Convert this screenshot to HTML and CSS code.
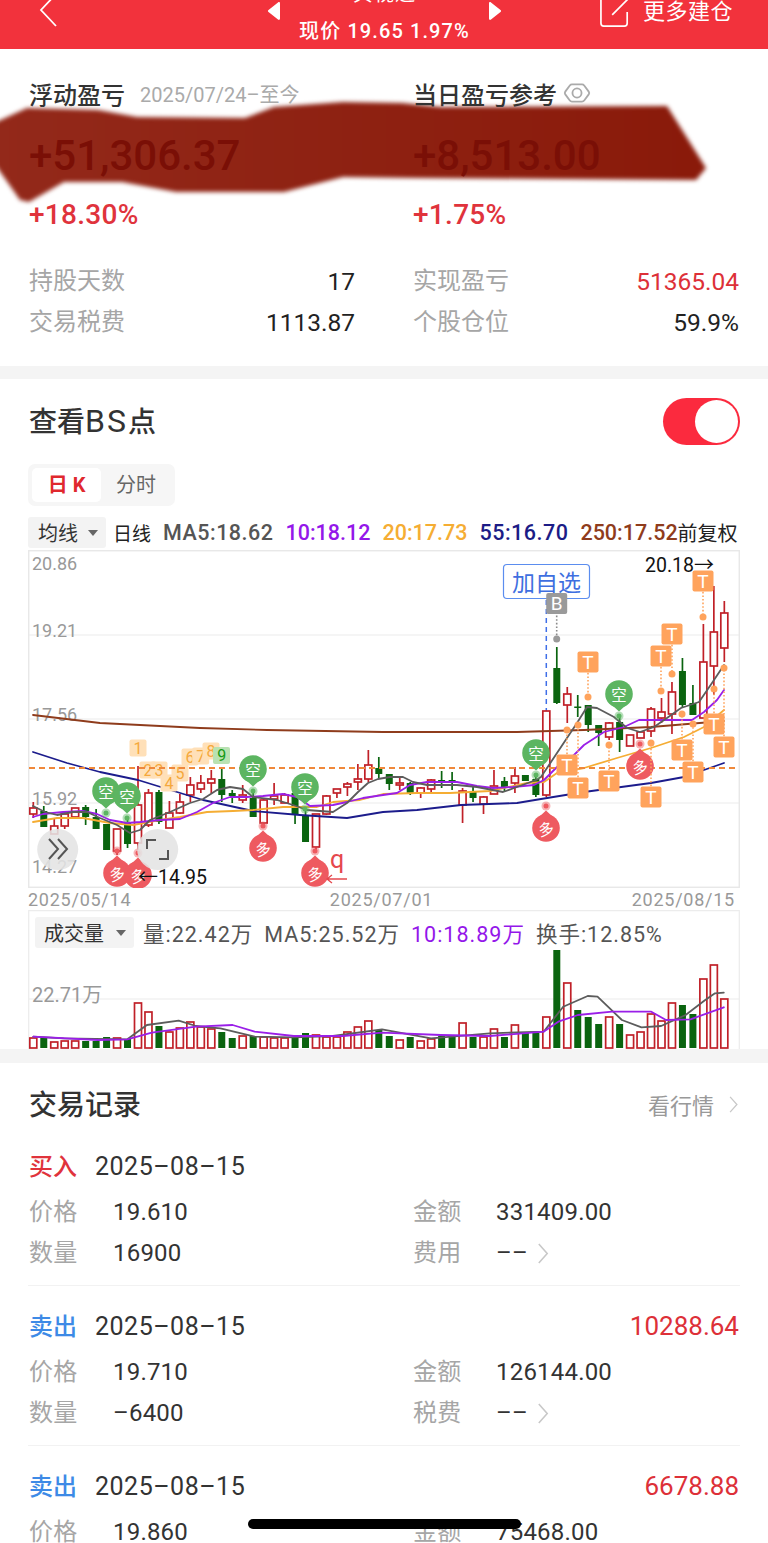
FILE: index.html
```html
<!DOCTYPE html>
<html lang="zh-CN">
<head>
<meta charset="utf-8">
<title>持仓详情</title>
<link rel="stylesheet" href="styles.css">
</head>
<body>
<div class="app">
  <header class="topbar">
    <svg class="back" viewBox="0 0 20 34" aria-hidden="true"><path d="M17 1 2 17l15 16"/></svg>
    <div class="stock">
      <svg class="tri" viewBox="0 0 14 20" aria-hidden="true"><path d="M13 2.500v15c0 1.300-1 1.800-2 1L1.500 11c-.8-.6-.8-1.500 0-2L11 1.500c1-.8 2-.3 2 1z"/></svg>
      <div class="stock-text">
        <div class="stock-name">贝视通</div>
        <div class="stock-price">现价 19.65 1.97%</div>
      </div>
      <svg class="tri" viewBox="0 0 14 20" aria-hidden="true"><path d="M1 2.500v15c0 1.300 1 1.800 2 1L12.500 11c.8-.6.8-1.500 0-2L3 1.500c-1-.8-2-.3-2 1z"/></svg>
    </div>
    <div class="more">
      <svg class="share" viewBox="0 0 32 32" aria-hidden="true"><path d="M14 0H4a3 3 0 0 0-3 3v25a3 3 0 0 0 3 3h22a3 3 0 0 0 3-3V16M13 19 33-1"/></svg>
      <span>更多建仓</span>
    </div>
  </header>

  <section class="summary">
    <svg class="scribble" viewBox="0 0 768 220" aria-hidden="true">
      <defs>
        <linearGradient id="inkFade" x1="0" x2="1" y1="0" y2="0">
          <stop offset="0" stop-color="#93291a"/>
          <stop offset="1" stop-color="#8a1a0a"/>
        </linearGradient>
      </defs>
      <path d="M-6 123 27 108 98 110 137 117 245 118 274 107 343 102 402 103 441 107 667 106 706 168 696 180 417 178 343 177 284 192 176 192 122 182 64 182 29 202 20 200-6 163Z"/>
    </svg>
    <div class="pnl-grid">
      <div class="pnl">
        <div class="pnl-title">浮动盈亏<span class="since">2025/07/24–至今</span></div>
        <div class="pnl-value">+51,306.37</div>
        <div class="pnl-pct">+18.30%</div>
      </div>
      <div class="pnl">
        <div class="pnl-title">当日盈亏参考<svg class="eye" viewBox="0 0 30 22" aria-hidden="true"><path d="M9.500 1.500h11c1 0 1.800.4 2.400 1.200l5 6.800c.7 1 .7 2 0 3l-5 6.800c-.6.8-1.400 1.200-2.400 1.200h-11c-1 0-1.800-.4-2.400-1.200l-5-6.800c-.7-1-.7-2 0-3l5-6.800c.6-.8 1.400-1.200 2.400-1.200z"/><circle cx="15" cy="11" r="5"/></svg></div>
        <div class="pnl-value">+8,513.00</div>
        <div class="pnl-pct">+1.75%</div>
      </div>
    </div>
    <div class="stats">
      <div class="stat"><span class="muted">持股天数</span><span class="num">17</span></div>
      <div class="stat"><span class="muted">实现盈亏</span><span class="num red">51365.04</span></div>
      <div class="stat"><span class="muted">交易税费</span><span class="num">1113.87</span></div>
      <div class="stat"><span class="muted">个股仓位</span><span class="num">59.9%</span></div>
    </div>
  </section>

  <div class="band"></div>

  <section class="bs">
    <div class="bs-head">
      <h2 class="section-title">查看<span class="latin">BS</span>点</h2>
      <div class="toggle"><span class="knob"></span></div>
    </div>
    <div class="tabs">
      <span class="tab tab-on">日 K</span>
      <span class="tab">分时</span>
    </div>
    <div class="kline-bar">
      <span class="pill">均线<i class="caret"></i></span>
      <span class="period">日线</span>
      <span class="ma ma5">MA5:18.62</span>
      <span class="ma ma10">10:18.12</span>
      <span class="ma ma20">20:17.73</span>
      <span class="ma ma55">55:16.70</span>
      <span class="ma ma250">250:17.52</span>
      <span class="adjust">前复权</span>
    </div>
    <svg id="kline" class="kline" viewBox="28 550 712 338"></svg>
    <div class="dates"><span>2025/05/14</span><span>2025/07/01</span><span>2025/08/15</span></div>
    <div class="volume">
      <svg id="vol" class="vol" viewBox="28 910 712 139"></svg>
      <div class="vol-bar">
        <span class="pill pill-vol">成交量<i class="caret"></i></span>
        <span class="ma ma5">量:22.42万</span>
        <span class="ma ma5">MA5:25.52万</span>
        <span class="ma ma10">10:18.89万</span>
        <span class="ma ma5">换手:12.85%</span>
      </div>
    </div>
  </section>

  <div class="band band-b"></div>

  <section class="trades">
    <div class="trades-head">
      <h2 class="section-title">交易记录</h2>
      <div class="quote">看行情<svg class="chev" viewBox="0 0 10 20" aria-hidden="true"><path d="M1 1l8 9-8 9"/></svg></div>
    </div>

    <article class="record">
      <div class="record-head"><b class="buy">买入</b><span class="rec-date">2025–08–15</span></div>
      <div class="record-grid">
        <span class="muted">价格</span><span>19.610</span><span class="muted">金额</span><span>331409.00</span>
        <span class="muted">数量</span><span>16900</span><span class="muted">费用</span><span class="fee">––<svg class="chev chev-fee" viewBox="0 0 10 20" aria-hidden="true"><path d="M1 1l8 9-8 9"/></svg></span>
      </div>
    </article>

    <article class="record">
      <div class="record-head"><b class="sell">卖出</b><span class="rec-date">2025–08–15</span><span class="profit">10288.64</span></div>
      <div class="record-grid">
        <span class="muted">价格</span><span>19.710</span><span class="muted">金额</span><span>126144.00</span>
        <span class="muted">数量</span><span>–6400</span><span class="muted">税费</span><span class="fee">––<svg class="chev chev-fee" viewBox="0 0 10 20" aria-hidden="true"><path d="M1 1l8 9-8 9"/></svg></span>
      </div>
    </article>

    <article class="record">
      <div class="record-head"><b class="sell">卖出</b><span class="rec-date">2025–08–15</span><span class="profit">6678.88</span></div>
      <div class="record-grid">
        <span class="muted">价格</span><span>19.860</span><span class="muted">金额</span><span>75468.00</span>
      </div>
    </article>
  </section>

  <div class="home-bar"></div>
</div>
<script src="chart.js"></script>
</body>
</html>
```
FILE: styles.css
```css
* { box-sizing: border-box; }
html, body { margin: 0; padding: 0; background: #fff; overflow: hidden; }
body { font-family: Roboto, "Noto Sans CJK SC", sans-serif; color: #333; }
.app { position: relative; width: 768px; height: 1543px; overflow: hidden; background: #fff; }

/* top bar */
.topbar { position: relative; height: 49px; background: #f2323c; color: #fff; overflow: hidden; }
.back { position: absolute; left: 39px; top: -7px; width: 20px; height: 34px; fill: none; stroke: #fff; stroke-width: 1.800; }
.stock { position: absolute; left: 267px; width: 235px; top: 0; display: flex; justify-content: space-between; }
.tri { width: 14px; height: 20px; margin-top: 1px; fill: #fff; flex: none; }
.stock-text { text-align: center; }
.stock-name { font-size: 20px; line-height: 24px; height: 24px; margin-top: -18px; letter-spacing: 1px; }
.stock-price { font-size: 20px; line-height: 26px; margin-top: 12px; white-space: nowrap; letter-spacing: 1.100px; font-weight: 500; }
.more { position: absolute; right: 35px; top: -3px; display: flex; align-items: center; gap: 13px; font-size: 22px; line-height: 30px; letter-spacing: .5px; }
.share { width: 30px; height: 30px; fill: none; stroke: #fff; stroke-width: 1.800; overflow: visible; }

/* floating profit summary */
.summary { position: relative; height: 317px; padding: 28px 29px 0; }
.scribble { position: absolute; left: 0; top: -49px; width: 768px; height: 220px; overflow: visible; filter: blur(2.200px); }
.scribble path { fill: url(#inkFade); }
.pnl-grid { position: relative; display: grid; grid-template-columns: 384px 326px; }
.pnl-title { display: flex; align-items: center; height: 32px; font-size: 24px; font-weight: 500; white-space: nowrap; }
.since { margin-left: 15px; font-size: 20px; font-weight: 400; color: #aaa; }
.eye { width: 28px; height: 20px; margin-left: 6px; fill: none; stroke: #aaa; stroke-width: 2; }
.pnl-value { margin-top: 22px; font-size: 42px; line-height: 50px; font-weight: 500; color: #7a0f06; }
.pnl-pct { margin-top: 16px; font-size: 28px; line-height: 36px; font-weight: 500; letter-spacing: .3px; color: #e0333c; }
.stats { display: grid; grid-template-columns: 326px 326px; column-gap: 58px; margin-top: 28px; font-size: 24px; line-height: 41px; }
.stat { display: flex; justify-content: space-between; color: #222; }
.num { font-size: 24.500px; }
.muted { color: #a6a6a6; }
.red { color: #dd3038; }

.band { height: 13px; background: #f4f4f4; }
.band-b { height: 14px; }

/* buy / sell points */
.bs { height: 670px; padding: 0 28px; overflow: hidden; }
.bs-head { display: flex; justify-content: space-between; align-items: center; padding: 19px 0 0 1px; height: 66px; }
.section-title { margin: 0; font-size: 28px; line-height: 40px; font-weight: 500; color: #333; }
.latin { font-size: 32px; font-weight: 400; letter-spacing: 2px; }
.toggle { position: relative; width: 77px; height: 47px; border-radius: 24px; background: #fb2a3e; }
.knob { position: absolute; right: 2px; top: 2px; width: 43px; height: 43px; border-radius: 50%; background: #fff; }
.tabs { display: inline-flex; margin-top: 19px; height: 42px; padding: 4px; background: #f6f6f6; border-radius: 7px; vertical-align: top; }
.tab { width: 70px; height: 34px; font-size: 20px; line-height: 34px; text-align: center; color: #666; }
.tab-on { width: 69px; background: #fff; color: #e0282e; font-weight: 700; border-radius: 5px; }
.kline-bar { display: flex; align-items: center; height: 31px; margin-top: 11px; font-size: 19px; white-space: nowrap; }
.pill { display: inline-flex; align-items: center; justify-content: space-between; flex: none; width: 78px; height: 31px; padding: 0 8px 0 10px; background: #f3f3f3; border-radius: 3px; color: #333; font-size: 20px; }
.pill-vol { width: 99px; padding-left: 9px; }
.caret { width: 0; height: 0; border: 5.500px solid transparent; border-top: 6px solid #666; border-bottom: 0; }
.period { margin-left: 7px; color: #222; }
.ma { font-size: 21.500px; font-weight: 500; letter-spacing: .5px; }
.kline-bar .ma { margin-left: 12px; }
.kline-bar .ma10, .kline-bar .ma20, .kline-bar .ma250 { letter-spacing: 0; }
.ma5 { color: #555; }
.ma10 { color: #9417ea; }
.ma20 { color: #f5ad33; }
.ma55 { color: #1c1c86; }
.ma250 { color: #8f3c1c; }
.adjust { margin-left: 0; font-size: 20px; color: #222; }
.kline { display: block; width: 712px; height: 338px; margin-top: 2px; }
.dates { display: flex; justify-content: space-between; height: 22px; padding-right: 5px; font-size: 18px; line-height: 24px; color: #999; letter-spacing: .75px; }
.volume { position: relative; height: 139px; }
.vol { display: block; width: 712px; height: 139px; }
.vol-bar { position: absolute; left: 7px; top: 7px; display: flex; align-items: center; gap: 11px; height: 31px; white-space: nowrap; }
.vol-bar .pill { margin-right: -2px; }
.vol-bar .ma { font-weight: 400; letter-spacing: 1px; }

/* chart drawing */
.frame { fill: #fff; stroke: #e8e8e8; stroke-width: 1.500; }
.grid { stroke: #ececec; stroke-width: 1.200; }
.now { stroke: #f0883a; stroke-width: 1.800; stroke-dasharray: 6 4; }
.axis { font: 18px Roboto, sans-serif; fill: #999; }
.axis-vol { font: 20px Roboto, "Noto Sans CJK SC", sans-serif; fill: #999; }
.up { fill: #fff; stroke: #c02028; stroke-width: 1.700; }
.up-wick { stroke: #c02028; stroke-width: 1.700; }
.down { fill: #0a640f; }
.down-wick { stroke: #0a640f; stroke-width: 1.700; }
.line { fill: none; stroke-width: 1.800; stroke-linejoin: round; stroke-linecap: round; }
.l5 { stroke: #5c5c5c; }
.l10 { stroke: #9a1fe8; }
.l20 { stroke: #f5ad33; }
.l55 { stroke: #1c1c8c; }
.l250 { stroke: #8f3c1c; }
.pin { text-anchor: middle; dominant-baseline: central; font: 15.500px "Noto Sans CJK SC", sans-serif; fill: #fff; }
.short { fill: #5cb561; }
.long { fill: #ee5a60; }
.halo { opacity: .45; }
.t-box { fill: #ffa35c; }
.t-stem { stroke: #ffa35c; stroke-width: 1.600; stroke-dasharray: 1.600 2; }
.t-label { text-anchor: middle; dominant-baseline: central; font: 19px Roboto, sans-serif; fill: #fff; }
.b-box { fill: #9a9a9a; }
.b-stem { stroke: #8a8a8a; stroke-width: 1.600; stroke-dasharray: 1.600 2; }
.b-line { stroke: #3f6fe8; stroke-width: 1.500; stroke-dasharray: 5 4; }
.add-box { fill: #fff; stroke: #5b8def; stroke-width: 1.200; }
.add-text { text-anchor: middle; dominant-baseline: central; font: 23px "Noto Sans CJK SC", sans-serif; fill: #3f6fe0; }
.nine { fill: #ffe0b8; }
.nine-text { text-anchor: middle; dominant-baseline: central; font: 16px Roboto, sans-serif; fill: #f5a83c; }
.nine-g { fill: #b9e2b2; }
.nine-g-text { text-anchor: middle; dominant-baseline: central; font: 16px Roboto, sans-serif; fill: #159a15; }
.extreme { font: 19.500px Roboto, sans-serif; fill: #111; }
.arrow { font: 20px "Noto Sans CJK SC", sans-serif; }
.note { font: 400 25px Roboto, sans-serif; fill: #e5484d; }
.note-line { fill: none; stroke: #e5484d; stroke-width: 1.300; }
.float-btn { fill: #e4e4e4; opacity: .88; }
.float-mark { fill: none; stroke: #555; stroke-width: 2; }

/* trade history */
.trades { height: 480px; padding: 23px 28px 0; background: #fff; }
.trades-head { display: flex; justify-content: space-between; align-items: center; height: 40px; padding-left: 1px; }
.quote { display: flex; align-items: center; gap: 15px; margin: -4px 2px 0 0; font-size: 22px; color: #999; }
.chev { width: 9px; height: 17px; fill: none; stroke: #c8c8c8; stroke-width: 1.500; }
.chev-fee { width: 12px; height: 21px; }
.record { height: 160px; padding: 22px 1px 0; border-bottom: 1px solid #f2f2f2; }
.record-head { display: flex; align-items: center; height: 36px; font-size: 25px; }
.record-head b { margin-top: -4px; font-size: 24px; font-weight: 500; }
.buy { color: #e0333c; }
.sell { color: #3d8ae6; }
.rec-date { margin-left: 18px; color: #333; letter-spacing: .5px; }
.profit { margin-left: auto; font-size: 26px; color: #dd3038; }
.record-grid { display: grid; grid-template-columns: 84px 300px 83px 1fr; grid-auto-rows: 41px; margin-top: 8px; font-size: 24px; line-height: 41px; letter-spacing: .2px; color: #333; }
.fee { display: flex; align-items: center; gap: 9px; }

.home-bar { position: absolute; left: 248px; top: 1519px; width: 273px; height: 10px; border-radius: 5px; background: #000; }
```
FILE: chart.js
```js
// Draws the daily K-line and the volume panel from hand-entered series.
const NS = 'http://www.w3.org/2000/svg';
const slotX = i => 33.3 + i * 10.47;

function el(parent, tag, attrs, text) {
  const node = document.createElementNS(NS, tag);
  for (const k in attrs) node.setAttribute(k, attrs[k]);
  if (text !== undefined) node.textContent = text;
  parent.appendChild(node);
  return node;
}

// [type, wick top, body top, body bottom, wick bottom]; the type is u (up) or d (down)
const candles = [
  ['u',802,808,814,818],['d',806,811,827,827],['u',819,826,834,834],['u',812,814,826,829],['u',808,808,817,817],
  ['d',805,807,817,825],['d',809,817,829,829],['d',824,824,850,850],['u',829,829,851,855],['d',818,823,844,848],
  ['u',766,805,843,850],['u',789,793,825,827],['d',790,792,822,824],['u',801,813,828,828],['u',794,802,813,814],
  ['u',777,785,795,802],['u',775,783,789,793],['u',770,779,783,793],['d',768,779,795,802],['d',790,793,796,803],
  ['u',785,795,800,803],['d',790,798,817,817],['u',798,800,823,825],['u',783,796,799,805],['u',793,795,803,803],
  ['d',792,793,815,824],['d',810,815,842,842],['u',814,814,847,852],['u',795,796,814,815],['u',789,789,793,798],
  ['u',782,784,787,796],['u',764,779,782,790],['u',750,765,779,782],['d',757,768,774,778],['d',774,774,784,790],
  ['u',778,783,785,790],['d',782,783,793,795],['u',787,788,793,798],['u',779,780,789,793],['d',771,780,783,788],
  ['d',772,780,782,790],['u',788,791,805,823],['d',787,791,798,802],['u',796,797,804,814],['u',770,786,794,794],
  ['d',777,781,787,792],['u',767,776,783,793],['d',775,775,781,781],['d',775,779,795,797],['u',711,711,795,797],
  ['d',647,668,703,704],['u',687,694,705,723],['d',695,706.500,708,717],['d',705,705,725,732],['d',725,725,733,746],
  ['u',722,723,737,740],['d',718,722,740,752],['u',735,735,746,746],['u',732,732,738,738],['u',707,709,731,737],
  ['u',698,712,718,723],['u',682,692,714,734],['d',658,671,705,707],['d',685,703,715,715],['u',624,662,718,718],
  ['u',586,632,666,695],['u',601,613,648,662]
];

const maLines = {
  l250: '33,715 100,723 200,728 267,730 383,732 517,732 584,730 651,727 724,721',
  l55: '33,752 67,763 100,772 138,780 203,800 253,811 300,815 347,818 383,812 417,810 461,805 517,803 541,799 584,792 651,783 684,777 724,763',
  l20: '33,822 57,818 83,818 110,823 133,825 160,820 180,817 207,812 233,811 253,810 283,807 317,807 333,802 360,800 383,794 417,793 450,793 490,791 527,783 544,782 557,773 584,768 617,758 651,748 684,737 704,727 724,710',
  l10: '33,817 43,814 63,812 83,811 97,814 110,820 127,823 140,822 160,820 180,819 197,812 213,803 230,797 247,797 263,796 283,794 297,797 310,806 333,805 347,802 363,798 383,795 397,793 410,785 427,782 457,782 477,786 493,788 513,787 534,785 544,780 557,767 574,755 584,745 604,732 624,727 639,720 692,720 704,712 717,700 724,690',
  l5: '33,806 45,812 57,815 73,812 87,812 100,818 117,825 130,833 140,830 150,820 170,812 190,803 203,799 217,790 230,787 243,789 253,797 277,800 293,805 307,810 333,812 347,803 358,792 368,783 378,779 390,777 403,777 413,782 427,785 457,785 477,787 503,792 517,787 536,780 541,777 577,723 587,707 597,708 614,717 627,728 640,732 654,727 667,718 681,708 699,702 712,683 724,665'
};

function drawKline(svg) {
  el(svg, 'rect', { class: 'frame', x: 28.700, y: 550.700, width: 710.600, height: 336.600 });
  [635, 719, 803].forEach(y => el(svg, 'line', { class: 'grid', x1: 29, x2: 739, y1: y, y2: y }));
  [['20.86', 569.500], ['19.21', 637], ['17.56', 721], ['15.92', 804.500], ['14.27', 872.500]].forEach(([t, y]) =>
    el(svg, 'text', { class: 'axis', x: 32, y }, t));

  el(svg, 'line', { class: 'b-line', x1: 546.300, x2: 546.300, y1: 600, y2: 711 });

  candles.forEach(([type, wt, bt, bb, wb], i) => {
    const x = slotX(i);
    el(svg, 'line', { class: type === 'u' ? 'up-wick' : 'down-wick', x1: x, x2: x, y1: wt, y2: wb });
    el(svg, 'rect', { class: type === 'u' ? 'up' : 'down', x: x - 3.500, y: bt, width: 7, height: Math.max(bb - bt, 1.500) });
  });

  Object.keys(maLines).forEach(k => el(svg, 'polyline', { class: 'line ' + k, points: maLines[k] }));

  // TD sequence counters
  [[1,138,748],[2,148,770],[3,159,770],[4,169,783],[5,180,773],[6,190,757],[7,200.700,756],[8,211,751]].forEach(([n, x, y]) => {
    el(svg, 'rect', { class: 'nine', x: x - 8.500, y: y - 8.500, width: 17, height: 17, rx: 2 });
    el(svg, 'text', { class: 'nine-text', x, y }, n);
  });
  el(svg, 'rect', { class: 'nine-g', x: 213, y: 747, width: 17, height: 17, rx: 2 });
  el(svg, 'text', { class: 'nine-g-text', x: 221.700, y: 755.500 }, 9);

  el(svg, 'line', { class: 'now', x1: 29, x2: 739, y1: 768, y2: 768 });

  // trade suggestion pins: a disc with a short tip pointing at the candle
  [[106,791],[127,796],[253,769],[305,787],[536,753],[619,694]].forEach(([x, y]) => {
    el(svg, 'circle', { class: 'short halo', cx: x, cy: y + 22, r: 4.500 });
    el(svg, 'circle', { class: 'short', cx: x, cy: y + 22, r: 2.500 });
    el(svg, 'circle', { class: 'short', cx: x, cy: y, r: 13.800 });
    el(svg, 'path', { class: 'short', d: `M${x - 7} ${y + 11}L${x} ${y + 17.500}L${x + 7} ${y + 11}z` });
    el(svg, 'text', { class: 'pin', x, y }, '空');
  });
  [[117,873],[138,875],[263,848],[315,873],[546,828],[640,766]].forEach(([x, y]) => {
    el(svg, 'circle', { class: 'long halo', cx: x, cy: y - 22, r: 4.500 });
    el(svg, 'circle', { class: 'long', cx: x, cy: y - 22, r: 2.500 });
    el(svg, 'circle', { class: 'long', cx: x, cy: y, r: 13.800 });
    el(svg, 'path', { class: 'long', d: `M${x - 7} ${y - 11}L${x} ${y - 17.500}L${x + 7} ${y - 11}z` });
    el(svg, 'text', { class: 'pin', x, y, transform: `rotate(-12 ${x} ${y})` }, '多');
  });

  [[703,581,617],[672,634,674],[661,656,691],[588,662,697],[567,765,730],[578,788,725],[609,781,745],[651,797,743],[682,750,714],[693,772,724],[714,724,689],[724,747,668]].forEach(([x, y, dot]) => {
    el(svg, 'line', { class: 't-stem', x1: x, x2: x, y1: y, y2: dot });
    el(svg, 'circle', { class: 't-box', cx: x, cy: dot, r: 3.500 });
    el(svg, 'rect', { class: 't-box', x: x - 10.500, y: y - 10.500, width: 21, height: 21, rx: 2 });
    el(svg, 'text', { class: 't-label', x, y }, 'T');
  });

  el(svg, 'rect', { class: 'add-box', x: 503.500, y: 564.500, width: 86, height: 34, rx: 3.500 });
  el(svg, 'text', { class: 'add-text', x: 546.500, y: 581 }, '加自选');
  el(svg, 'line', { class: 'b-stem', x1: 556.700, x2: 556.700, y1: 612, y2: 638 });
  el(svg, 'circle', { class: 'b-box', cx: 556.700, cy: 639, r: 3.500 });
  el(svg, 'rect', { class: 'b-box', x: 546.200, y: 593, width: 21, height: 21, rx: 2 });
  el(svg, 'text', { class: 't-label', x: 556.700, y: 603.500 }, 'B');

  // highest and lowest price callouts
  const high = el(svg, 'text', { class: 'extreme', x: 645, y: 572 }, '20.18');
  el(high, 'tspan', { class: 'arrow' }, '→');
  const low = el(svg, 'text', { class: 'extreme', x: 138, y: 884 });
  el(low, 'tspan', { class: 'arrow' }, '←');
  el(low, 'tspan', {}, '14.95');

  el(svg, 'text', { class: 'note', x: 330, y: 868 }, 'q');
  el(svg, 'path', { class: 'note-line', d: 'M347 879H327m5-4-5 4 5 4' });

  // floating chart controls
  el(svg, 'circle', { class: 'float-btn', cx: 57.700, cy: 849.500, r: 20.500 });
  el(svg, 'path', { class: 'float-mark', d: 'M49 839l9 10-9 10M58 839l9 10-9 10' });
  el(svg, 'circle', { class: 'float-btn', cx: 157.700, cy: 849.500, r: 20.500 });
  el(svg, 'path', { class: 'float-mark', d: 'M147 849v-9h9M168 850v9h-9' });
}

// Tops of the volume bars, in page pixels, one per candle
const volTops = [
  1038,1038,1042,1041,1041,1041,1041,1037,1038,1039,1003,1012,1026,1032,1028,1022,1027,1029,1032,1038,
  1036,1036,1037,1038,1038,1037,1033,1035,1037,1037,1032,1027,1021,1030,1036,1040,1037,1041,1039,1036,
  1037,1023,1037,1037,1029,1037,1025,1033,1033,1017,950,983,1010,1017,1024,1017,1024,1035,1032,1014,
  1021,1003,1005,1014,979,965,999
];
const volMa5 = [[68,410],[130,415],[260,418],[300,375],[365,362],[400,378],[450,385],[520,410],[600,412],[680,408],[780,388],[880,415],[1000,400],[1110,395],[1150,320],[1200,288],[1220,290],[1270,360],[1310,382],[1350,378],[1400,345],[1440,300],[1460,280],[1478,278]];
const volMa10 = [[68,410],[200,420],[260,418],[310,398],[400,380],[475,375],[520,395],[600,408],[700,408],[780,398],[900,405],[1000,408],[1110,395],[1140,365],[1180,345],[1250,335],[1330,335],[1360,360],[1410,358],[1478,322]];
const toPoints = list => list.map(([x, y]) => (x / 2.042).toFixed(1) + ',' + (900 + y / 3).toFixed(1)).join(' ');

function drawVolume(svg) {
  el(svg, 'path', { class: 'grid', d: 'M28.700 1049V910.700H739.300V1049', fill: 'none' });
  el(svg, 'line', { class: 'grid', x1: 29, x2: 739, y1: 999, y2: 999 });
  el(svg, 'text', { class: 'axis-vol', x: 32, y: 1002 }, '22.71万');
  volTops.forEach((top, i) => {
    el(svg, 'rect', { class: candles[i][0] === 'u' ? 'up' : 'down', x: slotX(i) - 3.500, y: top, width: 7, height: 1048 - top });
  });
  el(svg, 'polyline', { class: 'line l5', points: toPoints(volMa5) });
  el(svg, 'polyline', { class: 'line l10', points: toPoints(volMa10) });
}

drawKline(document.getElementById('kline'));
drawVolume(document.getElementById('vol'));
```
